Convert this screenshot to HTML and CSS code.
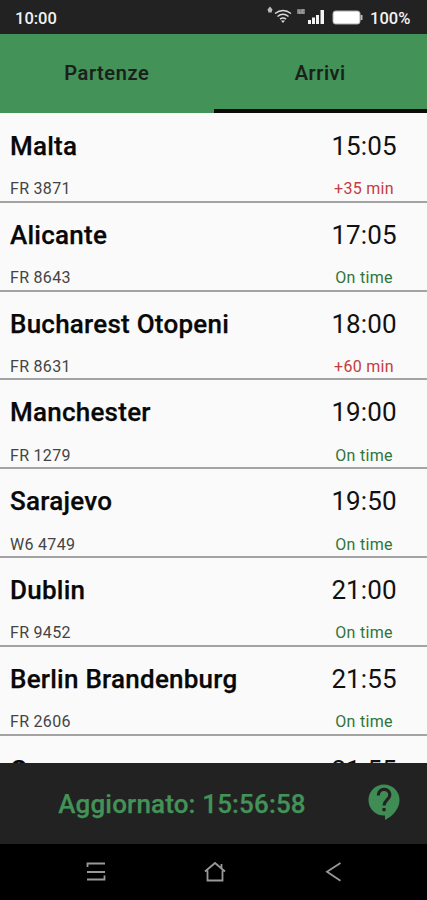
FILE: index.html
```html
<!DOCTYPE html>
<html lang="it">
<head>
<meta charset="utf-8">
<title>Arrivi</title>
<link rel="stylesheet" href="styles.css">
</head>
<body>
<div class="status">
  <span class="clock">10:00</span>
  <svg class="signals" width="98" height="24" viewBox="0 0 98 24">
    <g fill="none" stroke="#ddd" stroke-width="1.5">
      <path d="M10 8.500Q18 2.500 26 8.500M12.500 11.500Q18 7 23.500 11.500M15 14.200Q18 12 21 14.200"/>
    </g>
    <path d="M16 15.500h4l-2 2.500z" fill="#ddd"/>
    <path d="M5 1.500l2.500 3-1 3h-3l-1-3z" fill="#bbb"/>
    <path d="M32 4h8v5h-8z" fill="#777"/>
    <path d="M34 5v3h2M39 5h-2v3h2" fill="none" stroke="#bbb" stroke-width=".8"/>
    <path d="M43 15h3v4h-3zM47 12.500h3v6.500h-3zM51 10h3v9h-3zM55.500 5h3.500v14h-3.500z" fill="#f4f4f4"/>
    <rect x="68" y="6" width="27" height="13" rx="2.500" fill="#fff" stroke="#aaa"/>
    <path d="M95.500 10h2v5h-2z" fill="#bbb"/>
  </svg>
  <span class="level">100%</span>
</div>
<div class="tabs">
  <div class="tab">Partenze</div>
  <div class="tab active">Arrivi</div>
</div>
<div class="list">
  <div class="row"><div class="city">Malta</div><div class="time">15:05</div><div class="code">FR 3871</div><div class="state late">+35 min</div></div>
  <div class="row"><div class="city">Alicante</div><div class="time">17:05</div><div class="code">FR 8643</div><div class="state">On time</div></div>
  <div class="row"><div class="city">Bucharest Otopeni</div><div class="time">18:00</div><div class="code">FR 8631</div><div class="state late">+60 min</div></div>
  <div class="row"><div class="city">Manchester</div><div class="time">19:00</div><div class="code">FR 1279</div><div class="state">On time</div></div>
  <div class="row"><div class="city">Sarajevo</div><div class="time">19:50</div><div class="code">W6 4749</div><div class="state">On time</div></div>
  <div class="row"><div class="city">Dublin</div><div class="time">21:00</div><div class="code">FR 9452</div><div class="state">On time</div></div>
  <div class="row"><div class="city">Berlin Brandenburg</div><div class="time">21:55</div><div class="code">FR 2606</div><div class="state">On time</div></div>
  <div class="row"><div class="city">C</div><div class="time">21:55</div></div>
</div>
<div class="footer">
  <div class="updated">Aggiornato: 15:56:58</div>
  <svg class="help" width="32" height="37" viewBox="0 0 32 37">
    <path d="M16 0.500A15.500 15.500 0 0 0 16 31.500H17V36C25 32 31.500 24.500 31.500 16A15.500 15.500 0 0 0 16 .5z" fill="#3f8d54"/>
    <path d="M10.300 11.500C10.300 3.500 21.800 3.500 21.800 11C21.800 15.800 16 16 16 21.500" fill="none" stroke="#222" stroke-width="3.200"/>
    <path d="M14.400 24h3.200v3.200h-3.200z" fill="#222"/>
  </svg>
</div>
<div class="nav">
  <svg width="22" height="22" viewBox="0 0 22 22"><path d="M2.500 6V2.500H20M2 11H20M2 18.500H19.500V14.500"/></svg>
  <svg width="22" height="22" viewBox="0 0 22 22"><path d="M1 10.500L11 2L21 10.500M3.500 9.500V19.500H18.500V9.500M17.500 7V3"/></svg>
  <svg width="22" height="22" viewBox="0 0 22 22"><path d="M17.500 2L4 10.800L17.500 19.800"/></svg>
</div>
</body>
</html>
```

FILE: styles.css
```css
* { box-sizing: border-box; }
body {
  margin: 0;
  width: 427px;
  height: 900px;
  display: flex;
  flex-direction: column;
  overflow: hidden;
  background: #fafafa;
  color: #111;
  font-family: Roboto, sans-serif;
}
.status {
  height: 34px;
  flex: none;
  display: flex;
  align-items: center;
  padding: 0 16px 0 15px;
  background: #222;
  color: #f2f2f2;
  font-size: 16.500px;
  font-weight: 500;
}
.clock { flex: 1; padding-top: 2px; }
.signals { margin: 0 7px 0 0; }
.level { padding-top: 2px; width: 41px; white-space: nowrap; }
.tabs {
  height: 79px;
  flex: none;
  display: flex;
  background: #439358;
}
.tab {
  flex: 1;
  padding-top: 26px;
  line-height: 26px;
  text-align: center;
  font-size: 20px;
  font-weight: 500;
  letter-spacing: .6px;
  color: #1b1f1c;
  border-bottom: 4px solid transparent;
  -webkit-text-stroke: .2px #1b1f1c;
}
.tab.active { border-color: #0b0b0b; }
.list { flex: 1; min-height: 0; overflow: hidden; }
.row {
  height: 88.800px;
  display: grid;
  grid-template-columns: 1fr 106px;
  grid-template-rows: 65.500px 20px;
  padding-left: 10px;
  padding-right: 10px;
  border-bottom: 2px solid #a3a3a3;
}
.row:first-child { height: 89.750px; grid-template-rows: 66px 20px; }
.city, .time { line-height: 64px; }
.row:first-child .city, .row:first-child .time { line-height: 66px; }
.row:last-child { padding-top: 2px; }
.city {
  font-size: 26px;
  font-weight: 500;
  letter-spacing: .24px;
  white-space: nowrap;
  color: #080808;
  -webkit-text-stroke: .25px #080808;
}
.time {
  text-align: center;
  font-size: 26px;
  letter-spacing: .1px;
}
.code, .state { line-height: 20px; font-size: 16px; letter-spacing: .3px; }
.code { color: #444; }
.state { text-align: center; color: #2f743a; }
.late { color: #c43c40; }
.footer {
  height: 81px;
  flex: none;
  display: flex;
  align-items: center;
  background: #222;
}
.updated {
  width: 364px;
  flex: none;
  padding-top: 1px;
  text-align: center;
  font-size: 26px;
  font-weight: 500;
  letter-spacing: .15px;
  color: #439358;
  -webkit-text-stroke: .25px #439358;
}
.help { margin: -3px 0 0 4px; }
.nav {
  height: 56px;
  flex: none;
  display: flex;
  justify-content: space-between;
  align-items: center;
  padding: 0 82px 0 85px;
  background: #000;
}
.nav path { fill: none; stroke: #999; stroke-width: 1.800; }
```
